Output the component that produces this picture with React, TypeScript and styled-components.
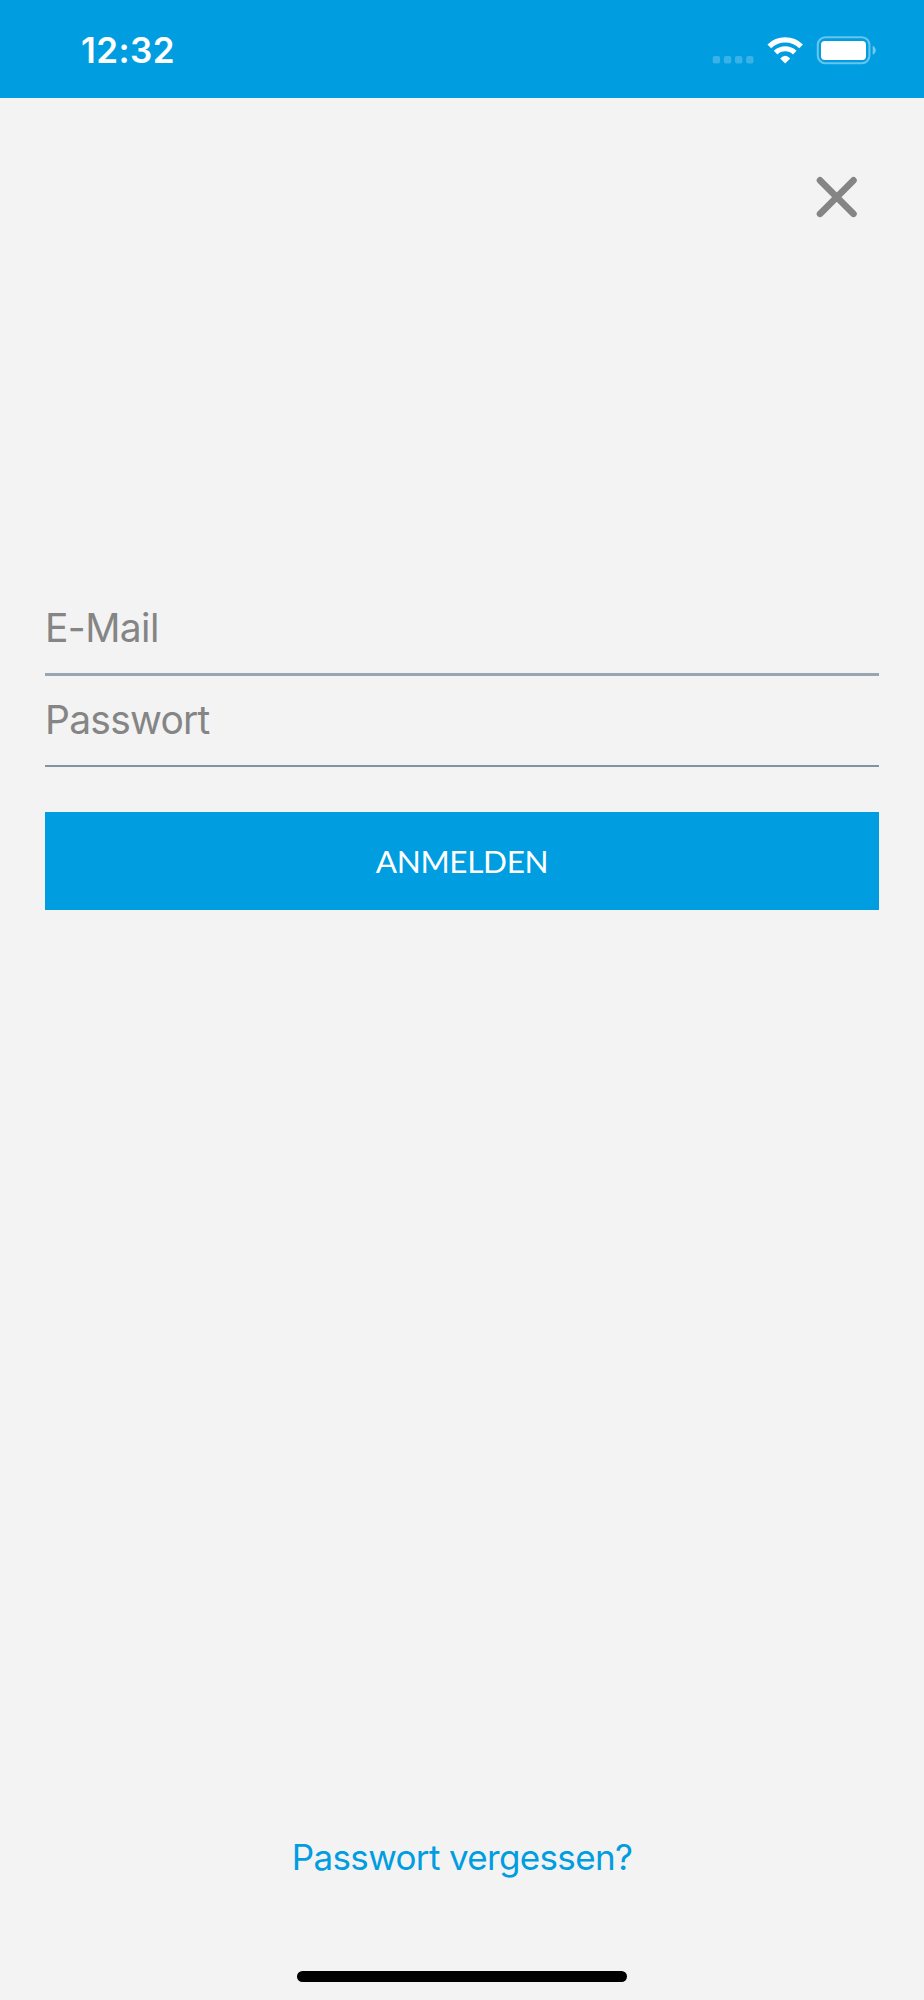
import React from "react";
import styled, { createGlobalStyle } from "styled-components";

const BLUE = "#009de1";

const GlobalStyle = createGlobalStyle`
  body {
    margin: 0;
    background: #f3f3f3;
  }
  * {
    box-sizing: border-box;
  }
`;

const Screen = styled.div`
  display: flex;
  flex-direction: column;
  width: 924px;
  height: 2000px;
  background: #f3f3f3;
  font-family: Inter, "Liberation Sans", sans-serif;
`;

const StatusBar = styled.header`
  display: flex;
  justify-content: space-between;
  flex: none;
  height: 98.4px;
  padding: 0 48px 0 81px;
  background: ${BLUE};
  color: #fff;
`;

const Time = styled.span`
  padding-top: 29px;
  font-size: 35px;
  font-weight: 600;
  line-height: 42px;
  letter-spacing: 0.4px;
`;

const StatusIcons = styled.svg`
  display: block;
  margin-top: 34px;
`;

const TopRow = styled.div`
  display: flex;
  justify-content: flex-end;
  flex: none;
  height: 490.6px;
  padding: 76.6px 65px 0 0;
`;

const CloseButton = styled.button`
  display: block;
  width: 44px;
  height: 44px;
  padding: 0;
  border: 0;
  background: none;
`;

const Form = styled.form`
  display: flex;
  flex-direction: column;
  flex: 1;
  padding: 0 45px;
`;

const Field = styled.input<{ $gap: number; $line: number; $lineColor: string; $tracking: number }>`
  display: block;
  width: 100%;
  height: ${(p) => 84 + p.$line}px;
  margin: 0 0 ${(p) => p.$gap}px;
  padding: 0 0 7px;
  border: 0;
  border-bottom: ${(p) => p.$line}px solid ${(p) => p.$lineColor};
  border-radius: 0;
  outline: 0;
  background: transparent;
  color: #858585;
  font: 400 39px/48px Inter, "Liberation Sans", sans-serif;
  letter-spacing: ${(p) => p.$tracking}px;

  &::placeholder {
    color: #858585;
    opacity: 1;
  }
`;

const SubmitButton = styled.button`
  height: 98px;
  margin: 45px 0 0;
  padding: 0;
  border: 0;
  background: ${BLUE};
  color: #fff;
  font: 400 31.5px/38px Lato, "Liberation Sans", sans-serif;
  letter-spacing: -0.35px;
`;

const Footer = styled.footer`
  display: flex;
  flex-direction: column;
  align-items: center;
  flex: none;
  height: 165px;
`;

const ForgotLink = styled.a`
  color: ${BLUE};
  font-size: 35px;
  line-height: 44px;
  letter-spacing: -0.65px;
  white-space: nowrap;
`;

const HomeIndicator = styled.div`
  width: 330px;
  height: 11px;
  margin-top: 92px;
  border-radius: 6px;
  background: #000;
`;

const dots = [712.7, 723.9, 735, 746.1];

export default function App() {
  return (
    <Screen>
      <GlobalStyle />
      <StatusBar>
        <Time>12:32</Time>
        <StatusIcons width="166" height="32" viewBox="710 34 166 32" aria-hidden="true">
          {dots.map((x) => (
            <rect key={x} x={x} y="56" width="7.4" height="7.4" rx="2" fill="#fff" opacity="0.22" />
          ))}
          <g fill="none" stroke="#fff">
            <path d="M769.3 46.4 A22.8 22.8 0 0 1 801.1 46.4" strokeWidth="5.3" />
            <path d="M775.6 52.6 A13.9 13.9 0 0 1 794.8 52.6" strokeWidth="5.1" />
          </g>
          <path d="M785.2 63.4 L780.2 58.4 Q785.2 53 790.2 58.4 Z" fill="#fff" />
          <rect x="817.8" y="37.2" width="51.6" height="26" rx="7.5" fill="none" stroke="#fff" strokeWidth="2.1" opacity="0.4" />
          <rect x="821" y="41" width="45" height="19" rx="3.7" fill="#fff" />
          <path d="M872.7 45.8 Q875.7 47.3 875.7 50.3 Q875.7 53.3 872.7 54.8 Z" fill="#fff" opacity="0.45" />
        </StatusIcons>
      </StatusBar>
      <TopRow>
        <CloseButton aria-label="Schließen">
          <svg width="44" height="44" viewBox="815 175 44 44" fill="none">
            <path d="M820 180.3 L853.5 213.8 M853.5 180.3 L820 213.8" stroke="#858585" strokeWidth="6.6" strokeLinecap="round" />
          </svg>
        </CloseButton>
      </TopRow>
      <Form>
        <Field type="text" placeholder="E-Mail" $gap={5} $line={3} $lineColor="#98a6b1" $tracking={-0.6} />
        <Field type="password" placeholder="Passwort" $gap={0} $line={2} $lineColor="#8293a1" $tracking={-0.75} />
        <SubmitButton type="button">ANMELDEN</SubmitButton>
      </Form>
      <Footer>
        <ForgotLink>Passwort vergessen?</ForgotLink>
        <HomeIndicator />
      </Footer>
    </Screen>
  );
}
